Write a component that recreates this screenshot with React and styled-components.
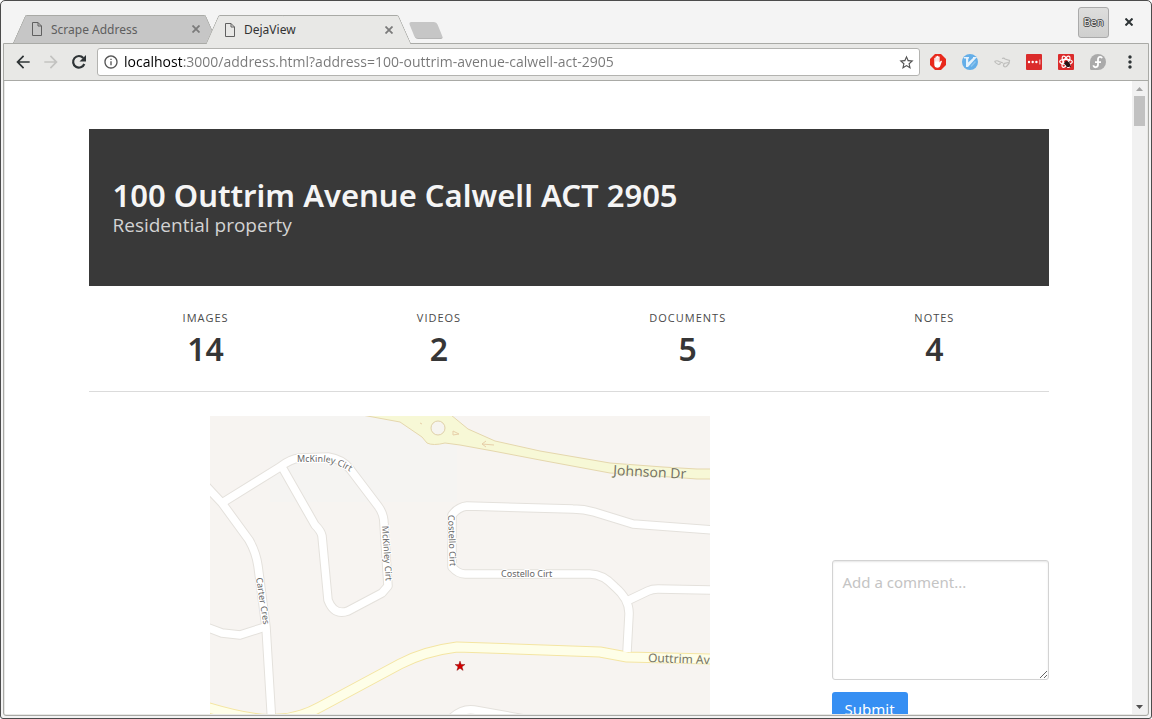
import React from "react";
import styled, { createGlobalStyle, css } from "styled-components";
import {
  MdArrowBack,
  MdArrowForward,
  MdInfoOutline,
  MdStarBorder,
  MdMoreVert,
} from "react-icons/md";

const uiFont = `"Noto Sans", "Open Sans", sans-serif`;

const GlobalStyle = createGlobalStyle`
  *, *::before, *::after { box-sizing: border-box; }
  html, body, #root { height: 100%; }
  body { margin: 0; font-family: ${uiFont}; color: #363636; background: #fff; overflow: hidden; }
  button { font: inherit; color: inherit; background: none; border: 0; padding: 0; cursor: pointer; }
  h1, p, dl, dt, dd { margin: 0; }
`;

const Window = styled.div`
  display: flex;
  flex-direction: column;
  height: 100vh;
  background: #f4f4f4;
  border: 1px solid #4c4c4c;
  border-radius: 5px 5px 3px 3px;
  overflow: hidden;
`;

const TitleBar = styled.header`
  display: flex;
  align-items: center;
  justify-content: space-between;
  height: 42px;
  flex: none;
  padding: 0 15px 0 18px;
`;

const Tabs = styled.div`
  display: flex;
  align-self: flex-end;
`;

const tabSide = css`
  content: "";
  position: absolute;
  z-index: -1;
  top: 0;
  bottom: 0;
  width: 60%;
  border-top: 1px solid #a9aaa6;
`;

const Tab = styled.div`
  position: relative;
  z-index: ${(p) => (p.$active ? 2 : 1)};
  isolation: isolate;
  display: flex;
  align-items: center;
  gap: 8px;
  width: 193px;
  height: ${(p) => (p.$active ? 29 : 28)}px;
  margin-bottom: ${(p) => (p.$active ? -1 : 0)}px;
  padding: 0 10px 0 12px;
  font-size: 12px;
  color: ${(p) => (p.$active ? "#333" : "#5e5e5e")};

  &::before,
  &::after {
    ${tabSide}
    background: ${(p) => (p.$active ? "#e8e8e6" : "#c6c6c6")};
  }
  &::before {
    left: 0;
    border-left: 1px solid #a9aaa6;
    border-top-left-radius: 2px;
    transform: skewX(-24deg);
  }
  &::after {
    right: 0;
    border-right: 1px solid #a9aaa6;
    border-top-right-radius: 2px;
    transform: skewX(24deg);
  }
`;

const TabTitle = styled.button`
  flex: 1;
  text-align: left;
`;

const IconButton = styled.button`
  display: flex;
  align-items: center;
  justify-content: center;
  flex: none;
  width: ${(p) => p.$w || 20}px;
  height: 20px;
  color: ${(p) => p.$tone || "#2e3436"};
`;

const TabClose = styled(IconButton)`
  width: 12px;
  color: #7b7b7b;
`;

const NewTab = styled.button`
  width: 28px;
  height: 17px;
  margin: 7px 0 0 7px;
  background: #c6c6c6;
  border-bottom: 1px solid #b5b5b5;
  border-radius: 3px;
  transform: skewX(22deg);
`;

const WindowActions = styled.div`
  display: flex;
  align-items: center;
  gap: 13px;
`;

const UserButton = styled.button`
  width: 31px;
  height: 31px;
  border: 1px solid #aaa;
  border-radius: 3px;
  background: linear-gradient(#dededd, #cfcfce);
  font-size: 11px;
  line-height: 28px;
  color: #e4e4e4;
  text-shadow: 1px 0 #4a4a4a, -1px 0 #4a4a4a, 0 1px #4a4a4a, 0 -1px #4a4a4a;
`;

const Frame = styled.div`
  display: flex;
  flex-direction: column;
  flex: 1;
  min-height: 0;
  margin: 0 2px 2px;
  border: 1px solid #a9aaa6;
  border-radius: 0 0 3px 3px;
  background: #e8e8e6;
`;

const Toolbar = styled.nav`
  display: flex;
  align-items: center;
  height: 37px;
  flex: none;
  padding: 0 8px 0 9px;
  border-bottom: 1px solid #a9aaa6;
`;

const NavButtons = styled.div`
  display: flex;
  gap: 8px;
  margin-right: 8px;
`;

const AddressBar = styled.label`
  display: flex;
  align-items: center;
  gap: 5px;
  flex: 1;
  height: 28px;
  padding: 0 3px 0 5px;
  border: 1px solid #b3b3b0;
  border-radius: 3px;
  background: #fff;
  color: #555;
`;

const AddressInput = styled.input`
  flex: 1;
  min-width: 0;
  border: 0;
  padding: 0;
  outline: 0;
  font: 14px/20px "Open Sans", "Noto Sans", sans-serif;
  color: transparent;
  background: linear-gradient(90deg, #000 58px, #777 58px);
  background-clip: text;
  -webkit-background-clip: text;
`;

const Extensions = styled.div`
  display: flex;
  gap: 12px;
  margin: 0 12px 0 8px;
`;

const Viewport = styled.div`
  display: flex;
  flex: 1;
  min-height: 0;
  margin: 0 1px 1px;
  background: #fff;
`;

const Page = styled.main`
  flex: 1;
  min-width: 0;
  overflow: hidden;
  padding: 48px 24px;
`;

const Container = styled.div`
  max-width: 960px;
  margin: 0 auto;
`;

const ScrollTrack = styled.div`
  display: flex;
  flex-direction: column;
  justify-content: space-between;
  align-items: center;
  width: 15px;
  background: #f1f1f1;
`;

const ScrollTop = styled.div`
  display: flex;
  flex-direction: column;
  align-items: center;
`;

const ScrollButton = styled.button`
  display: flex;
  align-items: center;
  justify-content: center;
  width: 15px;
  height: 15px;
  color: ${(p) => p.$tone};
`;

const ScrollThumb = styled.div`
  width: 11px;
  height: 30px;
  background: #c1c1c1;
`;

const Hero = styled.section`
  padding: 48px 24px;
  background: #393939;
`;

const HeroTitle = styled.h1`
  font-size: 31px;
  font-weight: 600;
  line-height: 36px;
  color: #f5f5f5;
`;

const HeroSubtitle = styled.p`
  font-family: "Open Sans", "Noto Sans", sans-serif;
  font-size: 19px;
  line-height: 25px;
  color: #d3d3d3;
`;

const Stats = styled.dl`
  display: flex;
  padding: 24px 0;
  border-bottom: 1px solid #dbdbdb;
`;

const Stat = styled.div`
  flex: 1 1 auto;
  text-align: center;
`;

const StatLabel = styled.dt`
  font-family: "Open Sans", "Noto Sans", sans-serif;
  font-size: 11px;
  line-height: 16px;
  letter-spacing: 1px;
  text-transform: uppercase;
  color: #4a4a4a;
`;

const StatValue = styled.dd`
  font-size: 32px;
  font-weight: 600;
  line-height: 36px;
  padding-top: 5px;
`;

const Columns = styled.div`
  display: flex;
  align-items: center;
  padding-top: 24px;
`;

const MapColumn = styled.div`
  display: flex;
  justify-content: center;
  flex: 1;
`;

const CommentForm = styled.form`
  flex: 0 0 217px;
  display: flex;
  flex-direction: column;
  align-items: flex-start;
  gap: 12px;
`;

const CommentBox = styled.textarea`
  display: block;
  width: 100%;
  height: 120px;
  padding: 9px 10px;
  border: 1px solid #d3d3d3;
  border-radius: 3px;
  box-shadow: inset 0 1px 2px rgba(10, 10, 10, 0.1);
  font: 15px/24px ${uiFont};
  resize: vertical;
  &::placeholder { color: #c4c4c4; }
`;

const SubmitButton = styled.button`
  height: 34px;
  padding: 0 13px;
  border-radius: 3px;
  background: #368ff3;
  color: #fff;
  font-size: 15px;
`;

const PageIcon = () => (
  <svg width="12" height="14" viewBox="0 0 12 14" fill="none" stroke="#606060" aria-hidden="true">
    <path d="M1.500 .5H7l3.500 3.500V13.500H1.500ZM7 .5V4h3.500" />
  </svg>
);

const ReloadIcon = () => (
  <svg width="16" height="16" viewBox="0 0 16 16" aria-hidden="true">
    <path d="M13.300 10A5.800 5.800 0 1 1 12.300 4" fill="none" stroke="currentColor" strokeWidth="2.200" />
    <path d="M15 1v6.500H8.500z" fill="currentColor" />
  </svg>
);

const CloseTab = ({ name }) => (
  <TabClose aria-label={`Close ${name}`}>
    <svg width="8" height="8" viewBox="0 0 8 8" stroke="currentColor" strokeWidth="1.800">
      <path d="M.5 .5l7 7M7.500 .5l-7 7" />
    </svg>
  </TabClose>
);

const BlockerIcon = () => (
  <svg width="16" height="16" viewBox="0 0 16 16">
    <path fill="#e8291c" d="M5 0h6l5 5v6l-5 5H5l-5-5V5z" />
    <path
      fill="#fff"
      d="M4.300 7.500V4.300c0-.9 1.200-.9 1.200 0V3c0-1 1.300-1 1.300 0v-.6c0-1 1.400-1 1.400 0V3c0-1 1.400-1 1.400 0v5.500l1-1.400c.5-.7 1.600-.3 1.300.5L10.200 12c-.5 1.200-1.300 1.700-2.600 1.700-2 0-3.300-1.100-3.300-3z"
    />
    <path stroke="#e9a09a" strokeWidth=".4" d="M5.600 4v3.500M7 3.500v4M8.300 3.500v4" />
  </svg>
);

const VimIcon = () => (
  <svg width="16" height="16" viewBox="0 0 16 16">
    <circle cx="8" cy="8" r="8" fill="#64aee8" />
    <path d="M2 3h5v1.500h-.8v4L11 4V3h4L6 13H4V4.500H2z" fill="#e5f2fc" />
    <path d="M9 12.500l4.500-5" stroke="#8cc4ee" strokeWidth="1.500" />
  </svg>
);

const GlassesIcon = () => (
  <svg width="18" height="16" viewBox="0 0 18 16" fill="none" stroke="#bdbdbb" strokeWidth="1.200">
    <path d="M1.500 7.500Q4 6 6 7.500L10 9M9 4.500Q11 3.500 12 5L16.500 6.500L16 9.500L13.500 12.500Q11 13.500 10.500 11.500L11 9.500L15.500 8.500M1.500 7.500Q3 9.500 5.500 10.500Q7 10.500 7.500 9" />
  </svg>
);

const PasswordIcon = () => (
  <svg width="16" height="16" viewBox="0 0 16 16">
    <rect width="16" height="16" rx="1" fill="#db2b2b" />
    <g fill="#fff">
      <circle cx="3" cy="8" r="1.200" />
      <circle cx="6.700" cy="8" r="1.200" />
      <circle cx="10.400" cy="8" r="1.200" />
      <path d="M13.500 5.500h.8v5h-.8z" />
    </g>
  </svg>
);

const BugIcon = () => (
  <svg width="16" height="16" viewBox="0 0 16 16">
    <rect width="16" height="16" rx="1" fill="#db2b2b" />
    <g fill="none" stroke="#fff" strokeWidth="1.200">
      <ellipse cx="8" cy="7.800" rx="6.300" ry="2.500" />
      <ellipse cx="8" cy="7.800" rx="6.300" ry="2.500" transform="rotate(60 8 7.800)" />
      <ellipse cx="8" cy="7.800" rx="6.300" ry="2.500" transform="rotate(120 8 7.800)" />
    </g>
    <ellipse cx="9.500" cy="10" rx="2.200" ry="3.300" fill="#271315" transform="rotate(-35 9.500 10)" />
    <path d="M6 9.500l7 3M11.500 7.500l-3 6" stroke="#271315" />
  </svg>
);

const FedoraIcon = () => (
  <svg width="16" height="16" viewBox="0 0 16 16">
    <path d="M8 0a8 8 0 1 1 0 16H1.500Q0 16 0 14.500V8a8 8 0 0 1 8-8z" fill="#aaa" />
    <path
      d="M12 4.300C11.500 2.300 8.300 2.400 8 4.800V10.500c0 3.500-4.500 3.500-4.500.8M5 8.200h6"
      fill="none"
      stroke="#fff"
      strokeWidth="1.800"
    />
  </svg>
);

const extensions = [
  ["Ad blocker", BlockerIcon],
  ["Vim keys", VimIcon],
  ["Reader", GlassesIcon],
  ["Passwords", PasswordIcon],
  ["Bug tools", BugIcon],
  ["Fedora", FedoraIcon],
];

const MapSvg = styled.svg`
  display: block;
  flex: none;
  width: 500px;
  height: 454px;
  background: #f7f4f1;
`;

const streets = [
  "M-4 70L12 87L39 124Q46 136 48 150L56 211L62 310",
  "M12 87L70 51Q80 43 90 42L118 41Q132 43 140 53L168 90Q174 98 174 108L178 170L172 177L138 195Q124 200 118 184L112 120Q111 115 105 109L72 51",
  "M-4 211L12 217L30 219L55 211",
  "M504 114L423 108L384 96Q374 93 363 93L257 90Q248 91 242 99V151Q248 158 255 158H380Q393 158 405 171Q420 184 419 199L417 236",
  "M417 185L438 175Q442 173 448 173L504 174",
  "M238 306Q250 292 264 294L320 304",
];
const outtrim = "M-4 291Q45 306 70 303Q90 302 110 291L190 248Q215 235 247 231L390 236L417 241L504 243";

const LocalityMap = () => (
  <MapSvg viewBox="0 0 500 454" role="img" aria-label="Map around 100 Outtrim Avenue">
    <path d="M60 0H247V86H60z" fill="#f5f4f2" />
    <g fill="none" strokeLinejoin="round">
      {streets.map((d) => <path key={d} d={d} stroke="#e4e1dc" strokeWidth="9.500" />)}
      <path d={outtrim} stroke="#f4e5a2" strokeWidth="11" />
      {streets.map((d) => <path key={d} d={d} stroke="#fff" strokeWidth="7.500" />)}
      <path d={outtrim} stroke="#fefee8" strokeWidth="9" />
    </g>
    <path
      d="M152 -1L190 6L212 21L217 27Q223 30 235 27L250 29L283 35L330 44L400 57L420 58L487 63H502V53H487L453 51L400 47L330 35L285 25L258 13L241 -1z"
      fill="#f7f8d6"
      stroke="#e5d7ad"
    />
    <circle cx="228" cy="12" r="7" fill="#f6f4ef" stroke="#dfd0a8" />
    <path d="M284 29L272 28M276 25L272 28L276 31M243 15L249 18L243 19zM210 7l2 1" fill="none" stroke="#e7cfa9" />
    <defs>
      <path id="mckinleyTop" d="M87 46L114 46Q132 48 150 63" />
    </defs>
    <g
      fontFamily='"Noto Sans", sans-serif'
      fontSize="9"
      fill="#666"
      stroke="#fff"
      strokeWidth="2"
      paintOrder="stroke"
    >
      <text><textPath href="#mckinleyTop">McKinley Cirt</textPath></text>
      <text transform="translate(172 110) rotate(86)">McKinley Cirt</text>
      <text transform="translate(46 162) rotate(81)">Carter Cres</text>
      <text transform="translate(238 99) rotate(88)">Costello Cirt</text>
      <text x="291" y="161">Costello Cirt</text>
    </g>
    <g fontFamily='"Noto Sans", sans-serif' fill="#777565" stroke="#fafae4" strokeWidth="1" paintOrder="stroke">
      <text fontSize="14" transform="translate(403 59) rotate(3)">Johnson Dr</text>
      <text fontSize="12" transform="translate(438 246) rotate(2)">Outtrim Av</text>
    </g>
    <path
      d="M250 245l1.200 3.500h3.800l-3 2.300 1.100 3.600-3.100-2.200-3.100 2.200 1.100-3.600-3-2.300h3.800z"
      fill="#d40000"
      stroke="#700"
      strokeWidth=".4"
    />
  </MapSvg>
);

const stats = [
  ["Images", 14],
  ["Videos", 2],
  ["Documents", 5],
  ["Notes", 4],
];

export default function App() {
  return (
    <Window>
      <GlobalStyle />
      <TitleBar>
        <Tabs>
          <Tab>
            <PageIcon />
            <TabTitle>Scrape Address</TabTitle>
            <CloseTab name="Scrape Address" />
          </Tab>
          <Tab $active>
            <PageIcon />
            <TabTitle>DejaView</TabTitle>
            <CloseTab name="DejaView" />
          </Tab>
          <NewTab aria-label="New tab" />
        </Tabs>
        <WindowActions>
          <UserButton>Ben</UserButton>
          <IconButton $w={14} aria-label="Close window">
            <svg width="8" height="8" viewBox="0 0 8 8" stroke="currentColor" strokeWidth="2">
              <path d="M.5 .5l7 7M7.500 .5l-7 7" />
            </svg>
          </IconButton>
        </WindowActions>
      </TitleBar>
      <Frame>
        <Toolbar>
          <NavButtons>
            <IconButton aria-label="Back"><MdArrowBack size={20} /></IconButton>
            <IconButton aria-label="Forward" $tone="#c3c3c1"><MdArrowForward size={20} /></IconButton>
            <IconButton aria-label="Reload"><ReloadIcon /></IconButton>
          </NavButtons>
          <AddressBar>
            <MdInfoOutline size={16} />
            <AddressInput
              aria-label="Address"
              defaultValue="localhost:3000/address.html?address=100-outtrim-avenue-calwell-act-2905"
            />
            <IconButton aria-label="Bookmark" $tone="#555"><MdStarBorder size={17} /></IconButton>
          </AddressBar>
          <Extensions>
            {extensions.map(([name, Icon]) => (
              <IconButton key={name} aria-label={name}><Icon /></IconButton>
            ))}
          </Extensions>
          <IconButton aria-label="Menu"><MdMoreVert size={20} /></IconButton>
        </Toolbar>
        <Viewport>
          <Page>
            <Container>
              <Hero>
                <HeroTitle>100 Outtrim Avenue Calwell ACT 2905</HeroTitle>
                <HeroSubtitle>Residential property</HeroSubtitle>
              </Hero>
              <Stats>
                {stats.map(([label, value]) => (
                  <Stat key={label}>
                    <StatLabel>{label}</StatLabel>
                    <StatValue>{value}</StatValue>
                  </Stat>
                ))}
              </Stats>
              <Columns>
                <MapColumn><LocalityMap /></MapColumn>
                <CommentForm onSubmit={(e) => e.preventDefault()}>
                  <CommentBox aria-label="Comment" placeholder="Add a comment..." />
                  <SubmitButton type="submit">Submit</SubmitButton>
                </CommentForm>
              </Columns>
            </Container>
          </Page>
          <ScrollTrack>
            <ScrollTop>
              <ScrollButton aria-label="Scroll up" $tone="#a3a3a3">
                <svg width="7" height="4" viewBox="0 0 7 4" fill="currentColor"><path d="M0 4L3.500 0L7 4z" /></svg>
              </ScrollButton>
              <ScrollThumb />
            </ScrollTop>
            <ScrollButton aria-label="Scroll down" $tone="#505050">
              <svg width="7" height="4" viewBox="0 0 7 4" fill="currentColor"><path d="M0 0L3.500 4L7 0z" /></svg>
            </ScrollButton>
          </ScrollTrack>
        </Viewport>
      </Frame>
    </Window>
  );
}
